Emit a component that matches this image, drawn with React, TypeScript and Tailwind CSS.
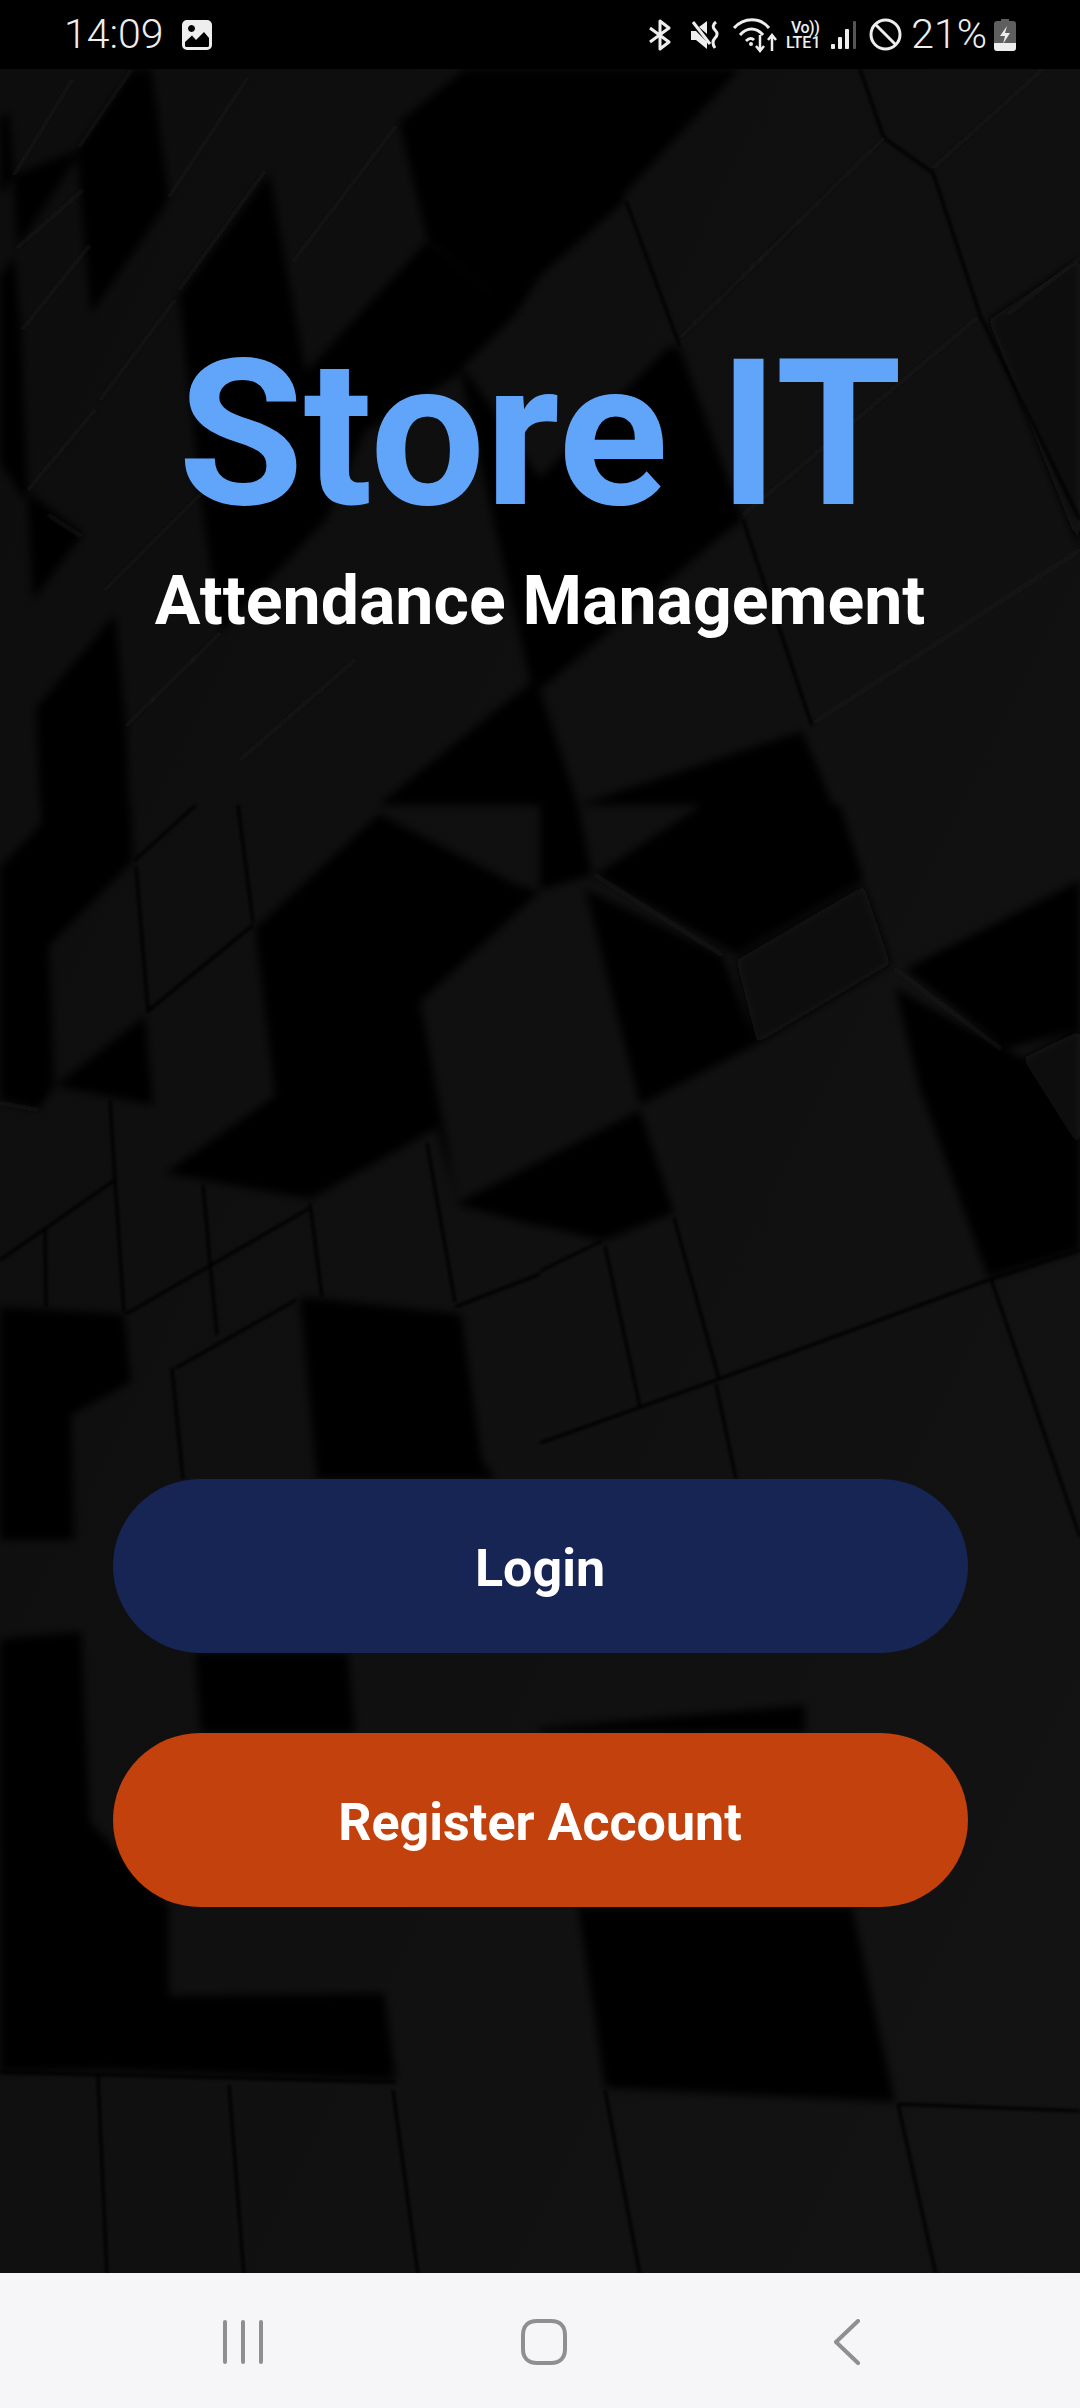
import React from 'react';

// shadowed sides of the cubes in the wallpaper
const shadows = [
  '0,117 9,112 14,175 0,197',
  '133,69 151,69 158,117 169,197 162,211 91,314 83,229 77,150',
  '14,175 77,150 76,159 17,248 14,187',
  '0,278 14,255 21,328 24,408 28,492 24,500 0,462',
  '28,492 83,534 33,600 28,511',
  '179,295 269,173 306,375 203,515',
  '203,515 327,518 220,633',
  '399,122 465,69 740,69 626,192 621,204 540,276 516,314 427,239',
  '306,372 427,241 516,314 465,365 458,375 365,431 327,518 203,515',
  '540,478 669,346 680,349 743,520 726,532 547,684 540,688 530,680 492,515 461,375 465,370',
  '36,708 115,614 126,726 129,805 40,805',
  '41,805 131,805 133,861 49,946 54,1086 38,1110 0,1100 0,868 41,824',
  '55,1086 145,1016 153,1105 72,1089',
  '262,922 379,814 517,885 403,978 437,1128 310,1199 165,1173 275,1096 255,927',
  '378,805 534,680 540,690 578,805',
  '578,805 802,731 833,805',
  '540,805 578,805 592,875 540,890',
  '702,805 840,805 864,880 736,955 595,875',
  '585,889 722,955 757,1044 640,1105',
  '540,1161 640,1110 674,1213 602,1241 540,1225',
  '895,988 1005,1049 1022,1058 1080,1150 1080,1250 988,1278 919,1086',
  '905,969 1080,880 1080,1030 1005,1049',
  '540,891 420,1002 403,978 517,885',
  '403,978 420,1002 458,1204 437,1128',
  '455,1204 540,1227 540,1161',
  '300,1297 461,1314 482,1461 496,1479 317,1479',
  '0,1307 124,1314 131,1382 71,1415 74,1540 0,1540',
  '0,1639 81,1632 90,1822 169,1907 169,1996 384,1993 396,2080 100,2070 0,2072',
  '195,1653 348,1653 355,1733 201,1733',
  '540,1728 805,1705 805,1733 540,1733',
  '578,1907 852,1907 895,2102 605,2088',
];

const dimFaces = [
  '736,960 864,885 891,964 757,1044',
  '988,320 1080,258 1080,550 1040,450',
  '1022,1058 1080,1030 1080,1150',
];

const seams = [
  '540,1443 719,1379 991,1279 1080,1250',
  '540,1271 602,1241',
  '605,1246 640,1407',
  '674,1218 719,1379',
  '716,1384 736,1479',
  '991,1279 1080,1537',
  '455,1307 540,1274',
  '427,1143 455,1302',
  '310,1203 322,1297',
  '203,1185 210,1262 217,1335',
  '110,1100 115,1180 124,1312',
  '45,1227 46,1307',
  '0,1260 115,1180',
  '126,1314 310,1208',
  '176,1368 296,1300',
  '172,1368 183,1479',
  '136,866 148,1011 253,925',
  '238,805 253,922',
  '134,861 196,805',
  '98,2076 107,2275',
  '229,2085 244,2275',
  '393,2090 418,2275',
  '605,2090 640,2275',
  '898,2104 936,2275',
  '898,2104 1080,2111',
  '0,2072 396,2082',
  '626,201 680,347',
  '743,520 812,726',
  '884,138 933,173 981,318 1080,520',
  '860,69 884,138',
];

const bevels = [
  '293,262 396,126',
  '179,290 265,171',
  '169,197 248,77',
  '79,147 131,70',
  '14,175 72,80',
  '17,248 83,190',
  '22,330 90,245',
  '28,490 95,410',
  '100,400 175,300',
  '105,590 205,490',
  '681,337 884,138',
  '933,168 1043,69',
  '743,515 977,318',
  '815,722 1080,550',
  '1008,314 1080,258',
  '595,875 722,955',
  '895,969 1001,1049',
  '48,515 81,536',
  '0,1103 38,1110',
  '126,726 220,633',
  '240,760 355,660',
];

const Wallpaper = () => (
  <svg className="absolute inset-0 w-full h-full" viewBox="0 69 1080 2204" preserveAspectRatio="none">
    <defs>
      <linearGradient id="wall" x1="0" y1="0" x2="1" y2="1">
        <stop offset="0" stopColor="#0d0d0d" />
        <stop offset="0.5" stopColor="#101010" />
        <stop offset="1" stopColor="#131313" />
      </linearGradient>
      <filter id="soft">
        <feGaussianBlur stdDeviation="4" />
      </filter>
      <filter id="softer">
        <feGaussianBlur stdDeviation="1.500" />
      </filter>
    </defs>
    <rect x="0" y="69" width="1080" height="2204" fill="url(#wall)" />
    <g filter="url(#soft)">
      {dimFaces.map((p) => (
        <polygon key={p} points={p} fill="#070707" />
      ))}
      {shadows.map((p) => (
        <polygon key={p} points={p} fill="#000000" />
      ))}
    </g>
    <g filter="url(#softer)" fill="none">
      {seams.map((p) => (
        <polyline key={p} points={p} stroke="#030303" strokeWidth="3" />
      ))}
      {bevels.map((p) => (
        <polyline key={p} points={p} stroke="#1a1a1a" strokeWidth="2" />
      ))}
    </g>
  </svg>
);

const StatusBar = () => (
  <div className="h-[69px] bg-black flex items-center text-[#eeeeee] font-['Roboto',sans-serif] shrink-0">
    <span className="ml-[64px] text-[41px] leading-none font-light">14:09</span>
    <svg className="ml-[18px] w-[30px] h-[30px]" viewBox="0 0 30 30">
      <path
        fillRule="evenodd"
        fill="#eeeeee"
        d="M5 0H25A5 5 0 0 1 30 5V25A5 5 0 0 1 25 30H5A5 5 0 0 1 0 25V5A5 5 0 0 1 5 0ZM3 22V25.500A1.500 1.500 0 0 0 4.500 27H25.500A1.500 1.500 0 0 0 27 25.500V18L22 12L14 20L10 15.500ZM9.500 5A3.500 3.500 0 1 0 9.510 5Z"
      />
    </svg>

    <div className="ml-auto mr-[64px] flex items-center">
      {/* bluetooth */}
      <svg className="w-[26px] h-[32px]" viewBox="0 0 26 32" fill="none" stroke="#eeeeee" strokeWidth="3">
        <path d="M3 9L22 23L13 30V2L22 9L3 23" strokeLinejoin="round" />
      </svg>
      {/* mute */}
      <svg className="ml-[17px] w-[30px] h-[30px]" viewBox="0 0 30 30" fill="#eeeeee">
        <path d="M1 11H6L17 22V29L6 20H1Z" />
        <path d="M9 7L17 1V14Z" />
        <path d="M3 2L20 24" stroke="#eeeeee" strokeWidth="3" />
        <path d="M26 2Q21 6 25 10T25 18T25 28" fill="none" stroke="#eeeeee" strokeWidth="3" />
      </svg>
      {/* wifi with data arrows */}
      <svg className="ml-[12px] w-[46px] h-[36px]" viewBox="0 0 46 36" fill="none" stroke="#eeeeee" strokeWidth="3">
        <path d="M2 11C12 0 28 0 37 11" />
        <path d="M8 18C15 10 24 10 31 18" />
        <path d="M14 24C17 21 20 21 22 23" />
        <circle cx="19" cy="27" r="2" fill="#eeeeee" stroke="none" />
        <path d="M28 18V34M24 29L28 34L32 29" strokeWidth="2.500" />
        <path d="M40 34V18M36 23L40 18L44 23" strokeWidth="2.500" />
      </svg>
      {/* VoLTE */}
      <div className="ml-[6px] w-[38px] flex flex-col items-center text-[16px] leading-[15px] font-medium">
        <span className="flex items-center tracking-tight pl-[4px]">Vo))</span>
        <span>LTE1</span>
      </div>
      {/* signal */}
      <svg className="ml-[8px] w-[28px] h-[30px]" viewBox="0 0 28 30" fill="#eeeeee">
        <rect x="1" y="24" width="4" height="5" rx="1" />
        <rect x="8" y="17" width="4" height="12" rx="1" />
        <rect x="15" y="9" width="4" height="20" rx="1" />
        <rect x="23" y="1" width="3" height="28" rx="1" fill="#555555" />
      </svg>
      {/* no interruptions */}
      <svg className="ml-[11px] w-[33px] h-[33px]" viewBox="0 0 33 33" fill="none" stroke="#eeeeee" strokeWidth="3">
        <circle cx="16.500" cy="16.500" r="14.500" />
        <path d="M6.500 6.500L26.500 26.500" />
      </svg>
      <span className="ml-[9px] text-[41px] leading-none font-light">21%</span>
      <svg className="ml-[7px] w-[22px] h-[32px]" viewBox="0 0 22 32">
        <path d="M7 0H15V2H19A3 3 0 0 1 22 5V24H0V5A3 3 0 0 1 3 2H7Z" fill="#5f5f5f" />
        <path d="M0 24H22V29A3 3 0 0 1 19 32H3A3 3 0 0 1 0 29Z" fill="#eeeeee" />
        <path d="M13 7L6 17H11L9 25L16 14H11Z" fill="#eeeeee" />
      </svg>
    </div>
  </div>
);

const NavBar = () => (
  <div className="h-[135px] bg-[#f6f6f8] flex items-center pl-[223px] pt-[2px] shrink-0">
    <svg className="w-[40px] h-[44px]" viewBox="0 0 40 44" stroke="#8f8f8f" strokeWidth="4" strokeLinecap="round">
      <path d="M2 2V42M20 2V42M38 2V42" />
    </svg>
    <svg className="ml-[258px] w-[46px] h-[46px]" viewBox="0 0 46 46" fill="none" stroke="#8f8f8f" strokeWidth="4">
      <path d="M16 2H30C39 2 44 7 44 16V30C44 39 39 44 30 44H16C7 44 2 39 2 30V16C2 7 7 2 16 2Z" />
    </svg>
    <svg className="ml-[266px] w-[28px] h-[46px]" viewBox="0 0 28 46" fill="none" stroke="#8f8f8f" strokeWidth="4" strokeLinecap="round" strokeLinejoin="round">
      <path d="M25 2L3 23L25 44" />
    </svg>
  </div>
);

const App = () => {
  return (
    <div className="w-[1080px] h-[2408px] flex flex-col bg-black font-['Roboto',sans-serif]">
      <StatusBar />

      <div className="relative flex-1 flex flex-col items-center overflow-hidden">
        <Wallpaper />
        <div className="relative w-full flex flex-col items-center pt-[264px]">
          <h1 className="text-[204px] leading-none font-bold text-[#60a5fa]">Store IT</h1>
          <p className="mt-[30px] text-[68px] leading-none font-bold text-white">Attendance Management</p>

          <div className="mt-[844px] w-[855px] flex flex-col gap-[80px]">
            <button className="h-[174px] rounded-full bg-[#172554] text-white text-[52px] font-bold pt-[6px]">Login</button>
            <button className="h-[174px] rounded-full bg-[#c2410c] text-white text-[52px] font-bold pt-[6px]">Register Account</button>
          </div>
        </div>
      </div>

      <NavBar />
    </div>
  );
};

export default App;
